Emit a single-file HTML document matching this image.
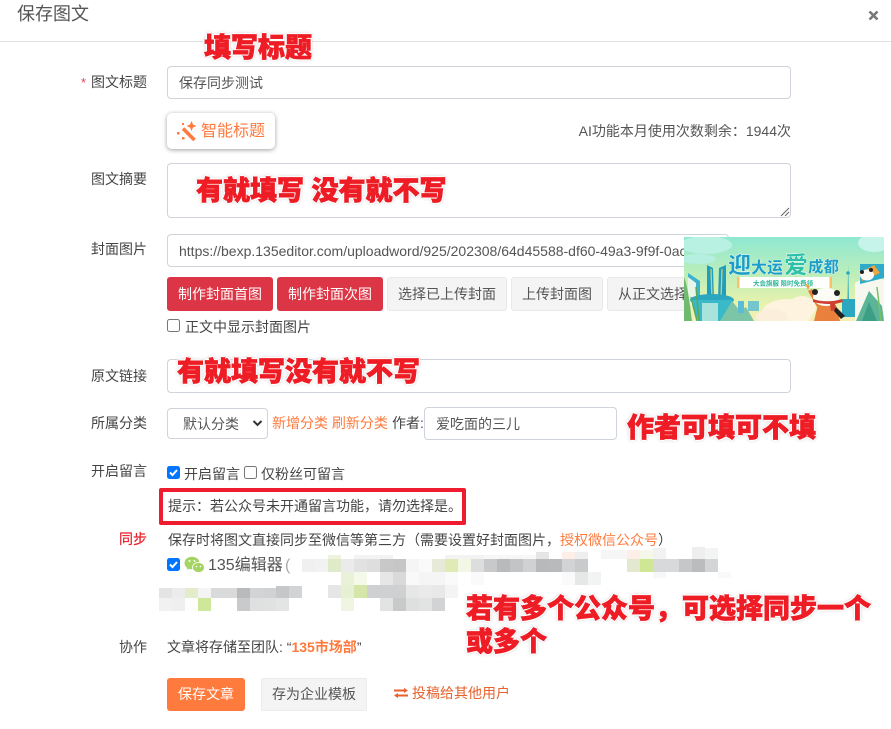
<!DOCTYPE html>
<html lang="zh">
<head>
<meta charset="utf-8">
<title>保存图文</title>
<style>
html,body{margin:0;padding:0;background:#fff}
body{width:891px;height:729px;position:relative;overflow:hidden;font-family:"Liberation Sans","Noto Sans CJK SC",sans-serif;font-size:14px;color:#495057}
.a{position:absolute;white-space:nowrap}
.t{position:absolute;white-space:nowrap;line-height:20px;height:20px}
.box{position:absolute;box-sizing:border-box;border:1px solid #ced4da;border-radius:4px;background:#fff}
.btn{position:absolute;box-sizing:border-box;top:277px;height:34px;line-height:32px;text-align:center;border-radius:3px;border:1px solid #e9e9e9;background:#f4f4f4;color:#555}
.red{background:#dc3545;border-color:#dc3545;color:#fff}
.lb{color:#444}
.or{color:#ff7a3d}
.ann{position:absolute;white-space:nowrap;font-size:27px;line-height:34px;font-weight:900;color:#ee1c25;-webkit-text-stroke:.7px #ee1c25;text-shadow:1.5px 0 0 #fff,-1.5px 0 0 #fff,0 1.5px 0 #fff,0 -1.5px 0 #fff,1.5px 1.5px 0 #eee,-1.5px 1.5px 0 #eee,1.5px -1.5px 0 #eee,-1.5px -1.5px 0 #eee,0 0 4px #aaa}
.cb{position:absolute;box-sizing:border-box;width:13px;height:13px;border:1px solid #767676;border-radius:2.5px;background:#fff}
.cb.on{background:#0075ff;border-color:#0075ff}
.cb svg{position:absolute;left:-1px;top:-1px}
</style>
</head>
<body>
<!-- header -->
<div class="t" style="left:17px;top:3px;font-size:18px;line-height:22px;height:22px;color:#555">保存图文</div>
<svg class="a" style="left:868px;top:10px" width="11" height="11" viewBox="0 0 11 11"><path d="M1.500 1.500L9.500 9.500M9.500 1.500L1.500 9.500" stroke="#777" stroke-width="2.600"/></svg>
<div class="a" style="left:0;top:41px;width:891px;height:1px;background:#dee2e6"></div>

<!-- title row -->
<div class="t" style="left:81px;top:73px;color:#e8404a;font-size:13px">*</div>
<div class="t lb" style="left:91px;top:72px">图文标题</div>
<div class="box" style="left:167px;top:66px;width:624px;height:33px"></div>
<div class="t" style="left:179px;top:73px;color:#555">保存同步测试</div>

<!-- smart title -->
<div class="a" style="left:167px;top:113px;width:108px;height:36px;border-radius:5px;background:#fff;box-shadow:0 1px 5px rgba(0,0,0,.38)"></div>
<svg class="a" style="left:177px;top:121px" width="21" height="21" viewBox="0 0 21 21"><path d="M6 7.500L17.500 19" stroke="#ff7a3d" stroke-width="3.600"/><path d="M14.500 0L16 3.500l3.500 1.500-3.500 1.500-1.500 3.500L13 6.500 9.500 5 13 3.500z" fill="#ff7a3d"/><rect x="0" y="11" width="2.500" height="2.500" fill="#ff7a3d"/><rect x="5" y="2" width="2" height="2" fill="#ff7a3d"/><rect x="5" y="16" width="2.500" height="2.500" fill="#ff7a3d"/></svg>
<div class="t or" style="left:201px;top:122px;font-size:16px">智能标题</div>
<div class="t" style="left:479px;top:121px;color:#555;font-size:14px;width:312px;text-align:right;">AI功能本月使用次数剩余&#xFF1A;1944次</div>

<!-- summary -->
<div class="t lb" style="left:91px;top:169px">图文摘要</div>
<div class="box" style="left:167px;top:163px;width:624px;height:55px"></div>
<svg class="a" style="left:780px;top:207px" width="10" height="10" viewBox="0 0 10 10"><path d="M1 9L9 1M5 9L9 5" stroke="#666" stroke-width="1"/></svg>

<!-- cover -->
<div class="t lb" style="left:91px;top:239px">封面图片</div>
<div class="box" style="left:167px;top:234px;width:562px;height:33px"></div>
<div class="t" style="left:179px;top:241px;color:#555;width:505px;overflow:hidden">https://bexp.135editor.com/uploadword/925/202308/64d45588-df60-49a3-9f9f-0ac</div>
<div class="btn red" style="left:167px;width:106px">制作封面首图</div>
<div class="btn red" style="left:277px;width:106px">制作封面次图</div>
<div class="btn" style="left:387px;width:120px">选择已上传封面</div>
<div class="btn" style="left:511px;width:92px">上传封面图</div>
<div class="btn" style="left:607px;width:110px;text-align:left;padding-left:10px">从正文选择</div>
<div class="cb" style="left:167px;top:319px"></div>
<div class="t" style="left:185px;top:317px;color:#444">正文中显示封面图片</div>

<!-- banner image -->
<svg class="a" style="left:684px;top:237px" width="200" height="84" viewBox="0 0 200 84">
<defs><linearGradient id="g" x1="0" y1="0" x2="0" y2="1"><stop offset="0" stop-color="#8ee8d2"/><stop offset=".45" stop-color="#bdeeb9"/><stop offset=".8" stop-color="#e8f2ac"/><stop offset="1" stop-color="#f4efb8"/></linearGradient></defs>
<rect width="200" height="84" fill="url(#g)"/>
<ellipse cx="22" cy="8" rx="26" ry="9" fill="#b8f0e2"/><ellipse cx="190" cy="6" rx="16" ry="9" fill="#c6f4ea"/><ellipse cx="14" cy="22" rx="18" ry="5" fill="#b4efe0"/>
<path d="M23 28l6 3 1 32h-7zM42 28l-7 3-1 32h8z" fill="#1d9fc0"/><path d="M27 32l1 30M38 32l-1 30" stroke="#e8c65a" stroke-width="1.300"/>
<path d="M4 36l12 8v24H4z" fill="#3cb3cf"/><path d="M4 40l8 6v22H4z" fill="#e9f5e6"/>
<ellipse cx="28" cy="63" rx="22" ry="6" fill="#2ba7bf"/><path d="M8 63h40v6c-2 6-4 9-6 15H14c-2-8-6-10-6-21z" fill="#3ab9c8"/><path d="M18 66h16v18H18z" fill="#a9e4dc"/>
<path d="M0 40c4 10 6 28 8 44H0z" fill="#6fbb6e"/><path d="M12 50l3 34M7 60l6 24" stroke="#5aa95c" stroke-width="1.500"/>
<path d="M36 84l12-20 8 10 6-4 8 14z" fill="#7cc5a6"/><rect x="54" y="64" width="6" height="12" fill="#5bbcd4"/><rect x="64" y="64" width="11" height="10" fill="#56bad3" opacity=".8"/>
<ellipse cx="103" cy="76" rx="25" ry="14" fill="#fdf3de"/><ellipse cx="118" cy="70" rx="14" ry="11" fill="#fdf3de"/><ellipse cx="88" cy="80" rx="16" ry="8" fill="#fbeeda"/>
<text x="44" y="36" font-family="Noto Sans CJK SC" font-weight="900" font-size="23" fill="#1a9dc6" stroke="#fff" stroke-width=".4">迎</text>
<text x="67" y="36" font-family="Noto Sans CJK SC" font-weight="900" font-size="16" fill="#1a9dc6" stroke="#fff" stroke-width=".3">大运</text>
<text x="100" y="36" font-family="Noto Sans CJK SC" font-weight="900" font-size="24" fill="#2cc0a8" stroke="#fff" stroke-width=".4">爱</text>
<text x="124" y="35" font-family="Noto Sans CJK SC" font-weight="900" font-size="15.500" fill="#1a9dc6" stroke="#fff" stroke-width=".3">成都</text>
<rect x="53" y="40" width="95" height="11" fill="#fff"/><rect x="53" y="40" width="2.500" height="11" fill="#fbc163"/><rect x="145.500" y="40" width="2.500" height="11" fill="#fbc163"/>
<text x="69" y="48.500" font-family="Noto Sans CJK SC" font-size="6.500" font-weight="700" fill="#2fb79a">大会旗服 限时免费领</text>
<path d="M163.500 62l.7-34 .7 34zM158 62h14v18h-14z" fill="#2ba7bf"/><circle cx="164" cy="36" r="1.800" fill="#2ba7bf"/>
<path d="M130 84l4-16h18l4 16z" fill="#e9813d"/><path d="M133 70l-9-16 4-2 9 14z" fill="#e9813d"/><path d="M124 53l-3-7 5 3z" fill="#f2a13f"/>
<ellipse cx="142" cy="60" rx="13" ry="9" fill="#fdfbf5"/><circle cx="131" cy="55" r="3" fill="#222"/><circle cx="153" cy="56" r="3" fill="#222"/>
<path d="M129 62c8 3 20 3 29 0l1 3-8 2 1 6-5 1-1-7c-6 0-13-1-17-2z" fill="#cf3f31"/>
<path d="M152 70l9 9-4 3-7-8z" fill="#222"/>
<path d="M171 84V46l16-9 13 6v41z" fill="#f6f7ee"/><path d="M176 27h24v14l-24 6z" fill="#2eabc9"/><path d="M176 36l14-8 6 8-18 8z" fill="#f2a33c"/>
<ellipse cx="183" cy="38" rx="7" ry="5.500" fill="#fdfbf5"/><circle cx="178" cy="35" r="2" fill="#222"/><circle cx="187" cy="33" r="2" fill="#222"/>
<path d="M172 84l13-30 13 15 2 15z" fill="#5cb596"/><path d="M178 84l7-19 8 19z" fill="#3d9e86"/>
<path d="M193 50l4 34" stroke="#7cc068" stroke-width="1.500"/>
</svg>

<!-- link -->
<div class="t lb" style="left:91px;top:366px">原文链接</div>
<div class="box" style="left:167px;top:359px;width:624px;height:34px"></div>

<!-- category -->
<div class="t lb" style="left:91px;top:413px">所属分类</div>
<div class="box" style="left:167px;top:408px;width:101px;height:31px"></div>
<div class="t" style="left:183px;top:414px;color:#555">默认分类</div>
<svg class="a" style="left:252px;top:419px" width="11" height="9" viewBox="0 0 11 9"><path d="M1.500 2l4 4 4-4" fill="none" stroke="#333" stroke-width="2"/></svg>
<div class="t or" style="left:272px;top:413px">新增分类 刷新分类</div>
<div class="t" style="left:392px;top:413px;color:#444">作者:</div>
<div class="box" style="left:424px;top:407px;width:193px;height:33px"></div>
<div class="t" style="left:436px;top:414px;color:#555">爱吃面的三儿</div>

<!-- comments -->
<div class="t lb" style="left:91px;top:461px">开启留言</div>
<div class="cb on" style="left:167px;top:466px"><svg width="13" height="13" viewBox="0 0 13 13"><path d="M3 6.500l2.500 2.500 4.500-5" fill="none" stroke="#fff" stroke-width="2"/></svg></div>
<div class="t" style="left:184px;top:464px;color:#444">开启留言</div>
<div class="cb" style="left:244px;top:466px"></div>
<div class="t" style="left:261px;top:464px;color:#444">仅粉丝可留言</div>

<div class="a" style="left:159px;top:488px;width:307px;height:37px;box-sizing:border-box;border:4px solid #ee1c2e;border-radius:2px"></div>
<div class="t" style="left:168px;top:496px;color:#444">提示&#xFF1A;若公众号未开通留言功能&#xFF0C;请勿选择是。</div>

<!-- sync -->
<div class="t" style="left:119px;top:529px;color:#e8202c;-webkit-text-stroke:.2px #e8202c">同步</div>
<div class="t" style="left:168px;top:530px;color:#444">保存时将图文直接同步至微信等第三方&#xFF08;需要设置好封面图片&#xFF0C;<span class="or">授权微信公众号</span>&#xFF09;</div>
<div class="cb on" style="left:167px;top:558px"><svg width="13" height="13" viewBox="0 0 13 13"><path d="M3 6.500l2.500 2.500 4.500-5" fill="none" stroke="#fff" stroke-width="2"/></svg></div>
<svg class="a" style="left:184px;top:556px" width="21" height="18" viewBox="0 0 21 18"><ellipse cx="8" cy="7" rx="7.500" ry="6.300" fill="#a5d465"/><path d="M3.500 11l-.8 3 3.500-2z" fill="#a5d465"/><ellipse cx="14.500" cy="11.500" rx="6" ry="5" fill="#a5d465" stroke="#fff" stroke-width=".8"/><circle cx="5.500" cy="5" r="1" fill="#fff"/><circle cx="10.500" cy="5" r="1" fill="#fff"/><circle cx="12.500" cy="10.500" r=".8" fill="#fff"/><circle cx="16.500" cy="10.500" r=".8" fill="#fff"/></svg>
<div class="t" style="left:208px;top:556px;font-size:16px;color:#555">135编辑器</div>
<div class="t" style="left:285px;top:556px;font-size:16px;color:#aaa">(</div>

<!-- mosaic -->
<svg class="a" style="left:0;top:0;pointer-events:none" width="891" height="729" viewBox="0 0 891 729" shape-rendering="crispEdges">
<g>
<rect x="536" y="552" width="13" height="7" fill="#e5e5e5"/><rect x="562" y="552" width="13" height="7" fill="#fdeee8"/><rect x="575" y="552" width="13" height="7" fill="#eeeeee"/><rect x="601" y="550" width="13" height="9" fill="#f6f6f6"/><rect x="614" y="550" width="13" height="9" fill="#f6f6f6"/><rect x="627" y="550" width="13" height="9" fill="#fdeee8"/><rect x="640" y="550" width="13" height="9" fill="#f5f7e8"/><rect x="653" y="548" width="13" height="11" fill="#f2f2f2"/><rect x="692" y="547" width="13" height="12" fill="#eeeeee"/><rect x="705" y="548" width="13" height="11" fill="#f3f5f4"/>
<rect x="328" y="555" width="13" height="4" fill="#eef3e0"/><rect x="354" y="555" width="39" height="4" fill="#f3f3f3"/><rect x="445" y="555" width="39" height="4" fill="#f3f3f3"/><rect x="484" y="555" width="52" height="4" fill="#f7f7f7"/>
</g>
<g>
<rect x="302" y="559" width="13" height="13" fill="#f0f0f0"/><rect x="315" y="559" width="13" height="13" fill="#f2f2f2"/><rect x="328" y="559" width="13" height="13" fill="#dfeac8"/><rect x="341" y="559" width="13" height="13" fill="#ebebeb"/><rect x="354" y="559" width="13" height="13" fill="#e2e2e2"/><rect x="367" y="559" width="13" height="13" fill="#dedede"/><rect x="380" y="559" width="13" height="13" fill="#c8c8c8"/><rect x="393" y="559" width="13" height="13" fill="#c6c6c6"/><rect x="406" y="559" width="13" height="13" fill="#f5f5f5"/><rect x="419" y="559" width="13" height="13" fill="#fafafa"/><rect x="432" y="559" width="13" height="13" fill="#e8ead9"/><rect x="445" y="559" width="13" height="13" fill="#dfeab5"/><rect x="458" y="559" width="13" height="13" fill="#f3f7e6"/><rect x="471" y="559" width="13" height="13" fill="#dddddd"/><rect x="484" y="559" width="13" height="13" fill="#c8c9cb"/><rect x="497" y="559" width="13" height="13" fill="#b9babc"/><rect x="510" y="559" width="13" height="13" fill="#c3c4c6"/><rect x="523" y="559" width="13" height="13" fill="#d0d1d3"/><rect x="536" y="559" width="13" height="13" fill="#b8b9bb"/><rect x="549" y="559" width="13" height="13" fill="#b9babc"/><rect x="562" y="559" width="13" height="13" fill="#d2d3d5"/><rect x="575" y="559" width="13" height="13" fill="#c9cacc"/>
<rect x="627" y="559" width="13" height="13" fill="#e3e9cf"/><rect x="640" y="559" width="13" height="13" fill="#cfe694"/><rect x="653" y="559" width="13" height="13" fill="#d8d9db"/><rect x="666" y="559" width="13" height="13" fill="#d8d9db"/><rect x="679" y="559" width="13" height="13" fill="#c6c7c9"/><rect x="692" y="559" width="13" height="13" fill="#bbbcbe"/><rect x="705" y="559" width="13" height="13" fill="#d4d5d7"/>
</g>
<g>
<rect x="341" y="572" width="13" height="13" fill="#e9f2d8"/><rect x="354" y="572" width="13" height="13" fill="#f5f9ea"/><rect x="380" y="572" width="13" height="13" fill="#e6e6e6"/><rect x="393" y="572" width="13" height="13" fill="#d8d9db"/><rect x="406" y="572" width="13" height="13" fill="#f9f9f9"/><rect x="419" y="572" width="13" height="13" fill="#f5f5f5"/><rect x="432" y="572" width="13" height="13" fill="#f5f5f5"/><rect x="445" y="572" width="13" height="13" fill="#fafafa"/><rect x="471" y="572" width="13" height="13" fill="#fafafa"/><rect x="562" y="572" width="13" height="13" fill="#fafafa"/><rect x="575" y="572" width="13" height="13" fill="#e6e7e7"/><rect x="588" y="572" width="13" height="13" fill="#f2f4f4"/><rect x="653" y="572" width="13" height="6" fill="#f7f7f7"/><rect x="718" y="572" width="13" height="6" fill="#f9f9f9"/>
</g>
<g>
<rect x="159" y="588" width="13" height="10" fill="#e4e4e4"/><rect x="172" y="588" width="13" height="10" fill="#ececec"/><rect x="185" y="588" width="13" height="10" fill="#e3eccb"/><rect x="198" y="588" width="13" height="10" fill="#f4f4f4"/><rect x="211" y="588" width="13" height="10" fill="#d9dadb"/><rect x="224" y="588" width="13" height="10" fill="#dadadb"/><rect x="237" y="588" width="13" height="10" fill="#b9babb"/><rect x="250" y="588" width="13" height="10" fill="#d3d4d5"/><rect x="263" y="588" width="13" height="10" fill="#d1d2d3"/><rect x="276" y="586" width="13" height="12" fill="#c6c7c9"/><rect x="289" y="586" width="13" height="12" fill="#d2d3d5"/>
<rect x="328" y="585" width="13" height="13" fill="#e6e6e6"/><rect x="341" y="585" width="13" height="13" fill="#e6f0d3"/><rect x="354" y="585" width="13" height="13" fill="#d4e6a8"/><rect x="367" y="585" width="13" height="13" fill="#cfd0d2"/><rect x="380" y="585" width="13" height="13" fill="#cfd0d2"/><rect x="393" y="585" width="13" height="13" fill="#cfd0d2"/><rect x="406" y="585" width="13" height="13" fill="#e7e7e8"/><rect x="419" y="585" width="13" height="13" fill="#eaeaea"/><rect x="432" y="585" width="13" height="13" fill="#e8e8e8"/><rect x="445" y="585" width="13" height="13" fill="#f4f4f4"/>
</g>
<g>
<rect x="159" y="598" width="13" height="13" fill="#f1f1f1"/><rect x="172" y="598" width="13" height="13" fill="#efefef"/><rect x="185" y="598" width="13" height="13" fill="#fdfdfb"/><rect x="198" y="598" width="13" height="13" fill="#cfe79a"/><rect x="237" y="598" width="13" height="13" fill="#c9cacc"/><rect x="250" y="598" width="13" height="13" fill="#dfe0e0"/><rect x="263" y="598" width="13" height="13" fill="#e0e1e1"/><rect x="276" y="598" width="13" height="13" fill="#e3e4e4"/>
<rect x="341" y="598" width="13" height="13" fill="#eff5e0"/><rect x="380" y="598" width="13" height="13" fill="#e2e3e3"/><rect x="393" y="598" width="13" height="13" fill="#c8c9cb"/><rect x="406" y="598" width="13" height="13" fill="#dedfdf"/><rect x="419" y="598" width="13" height="13" fill="#e2e3e3"/><rect x="432" y="598" width="13" height="13" fill="#d2d3d4"/>
</g>
</svg>

<!-- team -->
<div class="t lb" style="left:119px;top:637px">协作</div>
<div class="t" style="left:167px;top:637px;color:#444">文章将存储至团队: “<b class="or">135市场部</b>”</div>

<!-- footer buttons -->
<div class="a" style="left:167px;top:678px;width:78px;height:33px;background:#ff7a3d;border-radius:3px;color:#fff;text-align:center;line-height:33px">保存文章</div>
<div class="a" style="left:261px;top:678px;width:106px;height:33px;box-sizing:border-box;background:#f4f4f4;border:1px solid #ececec;border-radius:2px;color:#555;text-align:center;line-height:31px">存为企业模板</div>
<svg class="a" style="left:394px;top:688px" width="14" height="10" viewBox="0 0 14 10"><path d="M0 2.500h11M3 7.500h11" stroke="#e8622c" stroke-width="2"/><path d="M10 0l4 2.500L10 5zM4 5L0 7.500 4 10z" fill="#e8622c"/></svg>
<div class="t" style="left:412px;top:683px;color:#e8622c">投稿给其他用户</div>

<!-- annotations -->
<div class="ann" style="left:204px;top:31px">填写标题</div>
<div class="ann" style="left:196px;top:174px">有就填写 没有就不写</div>
<div class="ann" style="left:177px;top:355px">有就填写没有就不写</div>
<div class="ann" style="left:627px;top:411px">作者可填可不填</div>
<div class="ann" style="left:466px;top:592px">若有多个公众号&#xFF0C;可选择同步一个</div>
<div class="ann" style="left:466px;top:625px">或多个</div>
</body>
</html>
